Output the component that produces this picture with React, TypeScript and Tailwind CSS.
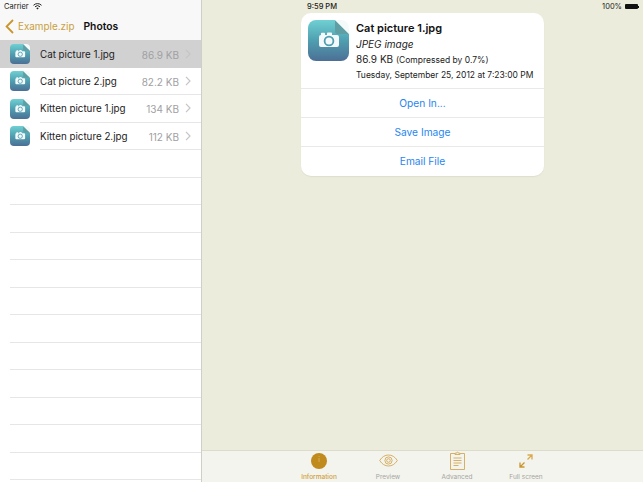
import type { FC } from 'react';

const files = [
    { name: 'Cat picture 1.jpg', size: '86.9 KB', selected: true },
    { name: 'Cat picture 2.jpg', size: '82.2 KB', selected: false },
    { name: 'Kitten picture 1.jpg', size: '134 KB', selected: false },
    { name: 'Kitten picture 2.jpg', size: '112 KB', selected: false },
];

// Empty table rows under the files
const emptyRows = Array.from({ length: 12 }, (_, i) => i);

const FileIcon: FC<{ size: number; id: string }> = ({ size, id }) => (
    <svg width={size} height={size} viewBox="0 0 41 41" className="shrink-0">
        <defs>
            <linearGradient id={id} x1="0" y1="0" x2="0" y2="1">
                <stop offset="0" stopColor="#6fd0d3" />
                <stop offset="0.5" stopColor="#4f9fb0" />
                <stop offset="1" stopColor="#4c6f95" />
            </linearGradient>
        </defs>
        <path d="M8 0H27L41 14V33a8 8 0 0 1-8 8H8a8 8 0 0 1-8-8V8a8 8 0 0 1 8-8Z" fill={`url(#${id})`} />
        <path d="M27 0L41 14H30a3 3 0 0 1-3-3Z" fill="#5f9ea3" />
        <path d="M27 0L41 14V8a8 8 0 0 0-8-8Z" fill="#f4fafa" />
        <path d="M13 15v-1.500a.8.8 0 0 1 .8-.8h2.400a.8.8 0 0 1 .8.8V15h2v-1.800a.8.8 0 0 1 .8-.8h3.400a.8.8 0 0 1 .8.8V15h5a2 2 0 0 1 2 2v8a2 2 0 0 1-2 2H13a2 2 0 0 1-2-2v-8a2 2 0 0 1 2-2Z" fill="#f4fafb" />
        <circle cx="21" cy="21" r="4.400" fill="none" stroke="#4f9fb0" strokeWidth="1.800" />
    </svg>
);

const Wifi = () => (
    <svg width="9" height="7" viewBox="0 0 9 7" fill="none" stroke="#222" strokeWidth="1">
        <path d="M.5 2.3a5.6 5.6 0 0 1 8 0" />
        <path d="M2 3.8a3.5 3.5 0 0 1 5 0" />
        <path d="M4.5 6.6 3.3 5.2a1.7 1.7 0 0 1 2.4 0Z" fill="#222" stroke="none" />
    </svg>
);

const Chevron: FC<{ color?: string }> = ({ color = '#c5c5c7' }) => (
    <svg width="6" height="10" viewBox="0 0 6 10" fill="none" stroke={color} strokeWidth="1.2" className="shrink-0">
        <path d="M1 .8 5 5 1 9.2" />
    </svg>
);

const Row: FC<{ name: string; size: string; selected: boolean }> = ({ name, size, selected }) => (
    <div className={selected ? 'flex h-[27.5px] items-center bg-[#d1d1d1]' : 'flex h-[27.5px] items-center'}>
        <div className="flex w-10 shrink-0 justify-start pl-[10px]">
            <FileIcon size={20} id={`row-${name.replace(/\W/g, '')}`} />
        </div>
        <div className={selected ? 'flex h-full min-w-0 flex-1 items-center pr-[10px]' : 'flex h-full min-w-0 flex-1 items-center border-b border-[#e6e6e8] pr-[10px]'}>
            <span className="flex-1 truncate pt-[3px] text-[9.8px] text-[#222]">{name}</span>
            <span className="mr-[6px] pt-[3px] text-[10px] text-[#a0a0a3]">{size}</span>
            <Chevron />
        </div>
    </div>
);

const TabItem: FC<{ label: string; active?: boolean; children: React.ReactNode }> = ({ label, active, children }) => (
    <div className="flex w-[69px] flex-col items-center">
        <div className="flex h-[20px] items-center justify-center">{children}</div>
        <span className={active ? 'mt-[3px] text-[6.5px] font-medium leading-[9px] text-[#cf9f3c]' : 'mt-[3px] text-[6.5px] leading-[9px] text-[#a5a5a2]'}>{label}</span>
    </div>
);

const ActionRow: FC<{ label: string; last?: boolean }> = ({ label, last }) => (
    <div className={last ? 'flex h-[29px] items-center justify-center pt-[1px] text-[10.2px] text-[#1f86ee]' : 'flex h-[29px] items-center justify-center border-b border-[#e9e9e6] pt-[1px] text-[10.2px] text-[#1f86ee]'}>
        {label}
    </div>
);

export default function App() {
    return (
        <div className="flex h-[482px] w-[643px] overflow-hidden bg-[#ecECdc] font-['Inter','Liberation_Sans',sans-serif]">
            {/* Left: file list */}
            <aside className="flex w-[202px] shrink-0 flex-col border-r border-[#cfcfc8] bg-white">
                <div className="h-[40px] shrink-0 bg-[#f8f8f8]">
                    <div className="flex h-[13px] items-center gap-[4px] pl-[4px] text-[7.5px] text-[#222]">
                        Carrier <Wifi />
                    </div>
                    <div className="flex h-[27px] items-center pl-[5px]">
                        <svg width="9" height="15" viewBox="0 0 9 15" fill="none" stroke="#c9962c" strokeWidth="1.8" className="mr-[4px]">
                            <path d="M8 1 1.600 7.500 8 14" />
                        </svg>
                        <span className="text-[9.9px] text-[#c9a040]">Example.zip</span>
                        <span className="ml-[9px] text-[10.3px] font-semibold text-[#111]">Photos</span>
                    </div>
                </div>
                {files.map(f => <Row key={f.name} {...f} />)}
                {emptyRows.map(i => (
                    <div key={i} className="h-[27.5px] shrink-0 pl-[10px]">
                        <div className="h-full border-b border-[#e6e6e8]" />
                    </div>
                ))}
            </aside>

            {/* Right: details and tab bar */}
            <main className="flex min-w-0 flex-1 flex-col">
                <div className="flex h-[13px] shrink-0 items-center pr-[4px] text-[7.5px] text-[#222]">
                    <span className="ml-[105px] font-medium">9:59 PM</span>
                    <span className="ml-auto mr-[3px]">100%</span>
                    <span className="block h-[5px] w-[13px] rounded-[1px] bg-[#111]" />
                    <span className="block h-[2px] w-[1px] bg-[#111]" />
                </div>
                <div className="flex flex-1 justify-center">
                    <div className="h-[163px] w-[243px] rounded-[10px] bg-white shadow-[0_1px_1px_#e0dfcc]">
                        <div className="flex h-[76px] gap-[7px] border-b border-[#e9e9e6] pl-[7px] pt-[7px]">
                            <FileIcon size={41} id="detail-icon" />
                            <div className="text-[#222]">
                                <div className="text-[11px] font-semibold leading-[16px] text-[#111]">Cat picture 1.jpg</div>
                                <div className="mt-[1px] text-[10px] italic leading-[15px]">JPEG image</div>
                                <div className="text-[10px] leading-[15px]">86.9 KB <span className="text-[8.5px]">(Compressed by 0.7%)</span></div>
                                <div className="whitespace-nowrap text-[8.5px] leading-[14px]">Tuesday, September 25, 2012 at 7:23:00 PM</div>
                            </div>
                        </div>
                        <ActionRow label="Open In..." />
                        <ActionRow label="Save Image" />
                        <ActionRow label="Email File" last />
                    </div>
                </div>
                <nav className="flex h-[32px] shrink-0 justify-center border-t border-[#dcdcc9] bg-[#f4f4ee]">
                    <TabItem label="Information" active>
                        <span className="flex h-4 w-4 items-center justify-center rounded-full bg-[#c08a1c] text-[7px] font-light text-[#eccf88]">i</span>
                    </TabItem>
                    <TabItem label="Preview">
                        <svg width="19" height="13" viewBox="0 0 19 13" fill="none" stroke="#d2a857" strokeWidth="0.9">
                            <path d="M.7 6.5C3 2.8 6 1 9.5 1s6.500 1.800 8.800 5.500C16 10.200 13 12 9.500 12S3 10.200.7 6.500Z" />
                            <circle cx="9.500" cy="6.500" r="3.600" />
                            <circle cx="9.500" cy="6.500" r="1.800" />
                        </svg>
                    </TabItem>
                    <TabItem label="Advanced">
                        <svg width="15" height="19" viewBox="0 0 15 19" fill="none" stroke="#d2a857" strokeWidth="0.9">
                            <path d="M5 2.500H.5v16h14v-16H10" />
                            <path d="M5 3.500V2.200h1.500a1 1 0 0 1 2 0H10v1.300Z" />
                            <path d="M3.500 7h8M3.500 9.500h8M3.500 12h8M3.500 14.500h5" />
                        </svg>
                    </TabItem>
                    <TabItem label="Full screen">
                        <svg width="14" height="14" viewBox="0 0 14 14" fill="none" strokeWidth="1.300">
                            <path d="M8.500 1H13V5.500M13 1 8.500 5.500" stroke="#d9a94c" />
                            <path d="M1 8.500V13H5.500M1 13 5.500 8.500" stroke="#c9962c" />
                        </svg>
                    </TabItem>
                </nav>
            </main>
        </div>
    );
}
